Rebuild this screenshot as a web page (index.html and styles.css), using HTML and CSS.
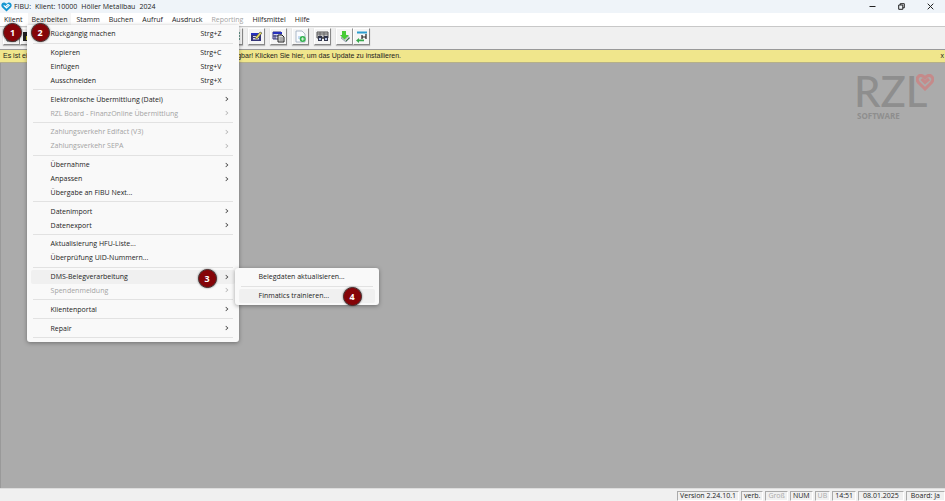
FILE: index.html
```html
<!DOCTYPE html>
<html lang="de">
<head>
<meta charset="utf-8">
<title>FIBU: Klient: 10000 Höller Metallbau 2024</title>
<link rel="stylesheet" href="styles.css">
</head>
<body>
<div class="app">
  <header class="titlebar">
    <svg class="app-icon" viewBox="0 0 11 10" aria-hidden="true"><path d="M5.5 9.6 1 5.2C-.8 2.800 1.400-.2 4 .8l1.500 1 1.500-1c2.600-1 4.800 2 3 4.400Z" fill="#1596d1"/><path d="M2.700 3.300 5.500 6l2.800-2.700L6.900 2.500 4.600 4.600" fill="none" stroke="#fff" stroke-width="1.100"/></svg>
    <h1 class="title"><span>FIBU:</span><span>Klient: 10000</span><span>Höller Metallbau</span><span>2024</span></h1>
    <div class="window-controls">
      <button aria-label="Minimieren"><svg viewBox="0 0 7 7"><path d="M.5 3.500h6"/></svg></button>
      <button aria-label="Wiederherstellen"><svg viewBox="0 0 7 7"><path d="M.7 2h4.100v4.300H.7zM2.200 2V.7h4.100v4.100H4.800"/></svg></button>
      <button aria-label="Schließen"><svg viewBox="0 0 7 7"><path d="m.7.7 5.600 5.600m0-5.600L.7 6.300"/></svg></button>
    </div>
  </header>

  <nav class="menubar">
    <div class="menu-root"><button class="menu-title">Klient</button><span class="badge badge-root">1</span></div>
    <div class="menu-root">
      <button class="menu-title open">Bearbeiten</button>
      <ul class="menu">
        <li><button>Rückgängig machen<kbd>Strg+Z</kbd></button></li>
        <li class="separator"></li>
        <li><button>Kopieren<kbd>Strg+C</kbd></button></li>
        <li><button>Einfügen<kbd>Strg+V</kbd></button></li>
        <li><button>Ausschneiden<kbd>Strg+X</kbd></button></li>
        <li class="separator"></li>
        <li class="parent"><button>Elektronische Übermittlung (Datei)</button></li>
        <li class="parent"><button disabled>RZL Board - FinanzOnline Übermittlung</button></li>
        <li class="separator"></li>
        <li class="parent"><button disabled>Zahlungsverkehr Edifact (V3)</button></li>
        <li class="parent"><button disabled>Zahlungsverkehr SEPA</button></li>
        <li class="separator"></li>
        <li class="parent"><button>Übernahme</button></li>
        <li class="parent"><button>Anpassen</button></li>
        <li><button>Übergabe an FIBU Next...</button></li>
        <li class="separator"></li>
        <li class="parent"><button>Datenimport</button></li>
        <li class="parent"><button>Datenexport</button></li>
        <li class="separator"></li>
        <li><button>Aktualisierung HFU-Liste...</button></li>
        <li><button>Überprüfung UID-Nummern...</button></li>
        <li class="separator"></li>
        <li class="parent"><button class="active">DMS-Belegverarbeitung</button>
          <span class="badge badge-dms">3</span>
          <ul class="menu submenu">
            <li><button>Belegdaten aktualisieren...</button></li>
            <li class="separator"></li>
            <li><button class="active">Finmatics trainieren...</button><span class="badge badge-finmatics">4</span></li>
          </ul>
        </li>
        <li class="parent"><button disabled>Spendenmeldung</button></li>
        <li class="separator"></li>
        <li class="parent"><button>Klientenportal</button></li>
        <li class="separator"></li>
        <li class="parent"><button>Repair</button></li>
        <li class="separator"></li>
      </ul>
      <span class="badge badge-root">2</span>
    </div>
    <div class="menu-root"><button class="menu-title">Stamm</button></div>
    <div class="menu-root"><button class="menu-title">Buchen</button></div>
    <div class="menu-root"><button class="menu-title">Aufruf</button></div>
    <div class="menu-root"><button class="menu-title">Ausdruck</button></div>
    <div class="menu-root"><button class="menu-title" disabled>Reporting</button></div>
    <div class="menu-root"><button class="menu-title">Hilfsmittel</button></div>
    <div class="menu-root"><button class="menu-title">Hilfe</button></div>
  </nav>

  <div class="toolbar">
    <div class="tool-group">
      <button aria-label="Klient öffnen"><svg viewBox="0 0 13 13"><path d="M2 3h9v8H2z" fill="#eee" stroke="#333"/></svg></button>
      <button aria-label="Speichern"><svg viewBox="0 0 13 13"><path d="M1 2h11v9H1z" fill="#222"/><path d="M4 6h8v4H4z" fill="#c8c020"/></svg></button>
    </div>
    <div class="tool-row">
      <button aria-label="Konto"></button>
      <button aria-label="Saldenliste"></button>
      <button aria-label="Journal"></button>
      <button aria-label="Kontoblatt"></button>
      <button aria-label="Offene Posten"></button>
      <button aria-label="Bilanz"></button>
      <button aria-label="Erfolgsrechnung"></button>
      <button aria-label="Umsatzsteuer"></button>
      <button aria-label="Auswertung"><svg viewBox="0 0 13 13"><path d="M10 2h2v2h-2zm0 3h2v2h-2zm0 3h2v2h-2z" fill="#6a9a8e"/></svg></button>
      <button aria-label="Buchen"><svg viewBox="0 0 13 13"><path d="M1 3h10v8H1z" fill="#343478"/><path d="M1 3h9v2H1z" fill="#2630bd"/><path d="M3 6h6v1H3zm0 2h6v1.500H3z" fill="#d6d6e8"/><path d="m5 8 5-6 2 1-5 6z" fill="#eadf58" stroke="#444" stroke-width=".6"/></svg></button>
      <button aria-label="Stapel kopieren"><svg viewBox="0 0 13 13"><path d="M1 2h8v7H1z" fill="#d4d6e8" stroke="#343478"/><path d="M1 2h9v2H1z" fill="#2630bd"/><path d="M3 5v4M1 6h5" stroke="#343478" fill="none"/><path d="M6 5h4l2 2v5H6z" fill="#ddd" stroke="#222"/><path d="M7.500 8H11M7.500 10H11" stroke="#777"/></svg></button>
      <button aria-label="Neuer Beleg"><svg viewBox="0 0 13 13"><path d="M2 1h6l3 3v8H2z" fill="#fafcff" stroke="#9ba8bb" stroke-width=".8"/><path d="M4 6h3v3H4z" fill="#c5daf3"/><circle cx="8.700" cy="9" r="3" fill="#32b34c"/><path d="M7 9h3.400M8.700 7.300v3.400" stroke="#fff" stroke-width=".8"/></svg></button>
      <button aria-label="Suchen"><svg viewBox="0 0 13 13"><path d="M1 2h11v6H1z" fill="#c4c4c4" stroke="#555"/><path d="M1 4h11M4 2v6M8 2v6" stroke="#666" fill="none"/><path d="M2 6h4v5H2zm6 0h4v5H8z" fill="#31354b"/><path d="M3 8h2v2H3zm6 0h2v2H9z" fill="#b2c1e0"/><path d="M6 8h2" stroke="#222"/></svg></button>
      <div class="tool-pair">
        <button aria-label="Daten einlesen"><svg viewBox="0 0 13 13"><path d="m3 8 5 4 4-4-4-3z" fill="#c3c9ca" stroke="#789" stroke-width=".7"/><path d="M4 1h4v4h3L6.500 9.500 2 5h2z" fill="#46cc36"/><path d="m8 11 3-3" stroke="#397b3b"/></svg></button>
        <button aria-label="Daten übernehmen"><svg viewBox="0 0 13 13"><path d="M2 1.500h10v2H2z" fill="#2b9cce"/><path d="M7 5v4M11 4v5M7 7h4" stroke="#222" stroke-width="1.200"/><path d="M1 10.500 4 8v1.600h5v1.600H4V13z" fill="#37a84c"/></svg></button>
      </div>
    </div>
  </div>

  <div class="notice">
    <a href="#update">Es ist eine neue Version für das Programm Finanzbuchhaltung (FIBU) verfügbar! Klicken Sie hier, um das Update zu installieren.</a>
    <button aria-label="Hinweis schließen">x</button>
  </div>

  <main class="workspace">
    <div class="brand">
      <div class="brand-name">RZL<svg class="brand-heart" viewBox="0 0 18 17" aria-hidden="true"><path d="M5.500 5 9 8.500 13 5M9 15 2.500 8.500C-1 4 3.500-.5 7.500 2.500L9 4 10.500 2.500C14.500-.5 19 4 15.500 8.500Z"/></svg></div>
      <div class="brand-sub">SOFTWARE</div>
    </div>
  </main>

  <footer class="statusbar">
    <span>Version 2.24.10.1</span>
    <span>verb.</span>
    <span class="off">Groß</span>
    <span>NUM</span>
    <span class="off">ÜB</span>
    <span>14:51</span>
    <span class="wide">08.01.2025</span>
    <span class="wide">Board: Ja</span>
  </footer>
</div>
</body>
</html>
```
FILE: styles.css
```css
* { box-sizing: border-box; }
body { margin: 0; font: 7px/14px "Open Sans", sans-serif; color: #1c1c1c; }
button { font: inherit; color: inherit; border: 0; padding: 0; background: none; }
button:disabled { color: #a3a3a3; }
.app { display: flex; flex-direction: column; min-height: 100vh; overflow: hidden; }

.titlebar { display: flex; align-items: center; height: 13px; background: #eff4f9; line-height: 12px; }
.app-icon { width: 11px; height: 10px; margin-left: 1px; }
.title { display: flex; gap: 4px; margin: 0 0 0 2px; font: inherit; }
.window-controls { display: flex; margin-left: auto; }
.window-controls button { display: grid; place-items: center; width: 29px; height: 12px; }
.window-controls svg { width: 7px; height: 7px; fill: none; stroke: #222; stroke-width: 1; }

.menubar { display: flex; gap: 1px; height: 13px; background: #fff; }
.menu-root { position: relative; }
.menu-title { display: block; padding: 0 4px; line-height: 13px; }
.menu-title.open { background: #f5f5f5; }

.menu {
  position: absolute; z-index: 2; top: 12px; left: -1px;
  display: flex; flex-direction: column;
  width: 212px; height: 317px; margin: 0; padding: 2px 4px;
  list-style: none; background: #f9f9f9; border-radius: 0 0 3px 3px;
  box-shadow: 0 1px 4px rgba(0, 0, 0, .35);
}
.menu li { position: relative; flex: 1; display: flex; }
.menu li > button {
  flex: 1; display: flex; align-items: center; justify-content: space-between;
  padding: 0 13px 0 20px; border-radius: 2px; line-height: 13px; text-align: left;
}
.menu li > button.active { background: #f0f0f0; }
.menu kbd { font: inherit; }
.menu .separator { flex: 0 0 5px; align-items: center; }
.menu .separator::before { content: ""; flex: 1; height: 1px; margin: 0 2px; background: #e2e2e2; }
.parent > button::after {
  content: ""; box-sizing: content-box; width: 3px; height: 3px; margin-right: -6px;
  border: solid #444; border-width: 1px 1px 0 0; transform: rotate(45deg) scale(.8);
}
.parent > button:disabled::after { border-color: #b5b5b5; }
.menu.submenu { top: -2px; left: 204px; width: 144px; height: 37px; border-radius: 3px; }

.badge {
  position: absolute; z-index: 3; width: 19px; height: 19px;
  border: 1px solid #4b3030; border-radius: 50%; background: #850408; color: #fff;
  box-shadow: 0 0 2px rgba(0, 0, 0, .6);
  font: bold 9px/17px "Open Sans", sans-serif; text-align: center;
}
.badge-root { top: 10px; left: 3px; }
.badge-dms { top: -1px; right: 18px; }
.badge-finmatics { top: -2px; right: 13px; }

.toolbar {
  display: flex; gap: 13px; padding: 1px 3px 4px;
  background: #f0f0f0; border-top: 1px solid #c8c8c8; border-bottom: 1px solid #999;
}
.tool-group, .tool-pair { display: flex; }
.tool-row { display: flex; gap: 5px; }
.toolbar button {
  display: grid; place-items: center; width: 17px; height: 17px;
  background: #f5f5f5; border: 1px solid; border-color: #fff #888 #888 #fff;
  box-shadow: 0 1px 1px #bbb;
}
.toolbar svg { width: 13px; height: 13px; }

.notice {
  display: flex; justify-content: space-between; align-items: center;
  padding: 0 1px 0 3px; background: #f0e68c; border-bottom: 1px solid #b5b089;
  font: 7px/12px "Liberation Sans", sans-serif;
}
.notice a { color: inherit; text-decoration: none; }

.workspace { flex: 1; background: #ababab; border-left: 1px solid #999; }
.brand { width: 91px; padding-top: 8px; margin-left: auto; color: #8e8e8e; }
.brand-name { display: flex; font: 500 42px/40px Lato, sans-serif; }
.brand-heart { width: 18px; height: 17px; margin: 3px 0 0 -11px; fill: none; stroke: #c58a8a; stroke-width: 3; }
.brand-sub { padding-left: 3px; font: bold 8px/10px "Open Sans", sans-serif; }

.statusbar { display: flex; justify-content: flex-end; gap: 2px; height: 13px; padding-top: 2px; background: #f0f0f0; border-top: 1px solid #ddd; }
.statusbar span { padding: 0 2px; border: 1px solid; border-color: #aaa #fff #fff #aaa; line-height: 8px; white-space: nowrap; }
.statusbar .off { color: #aaa; }
.statusbar .wide { padding: 0 4px; }
```
